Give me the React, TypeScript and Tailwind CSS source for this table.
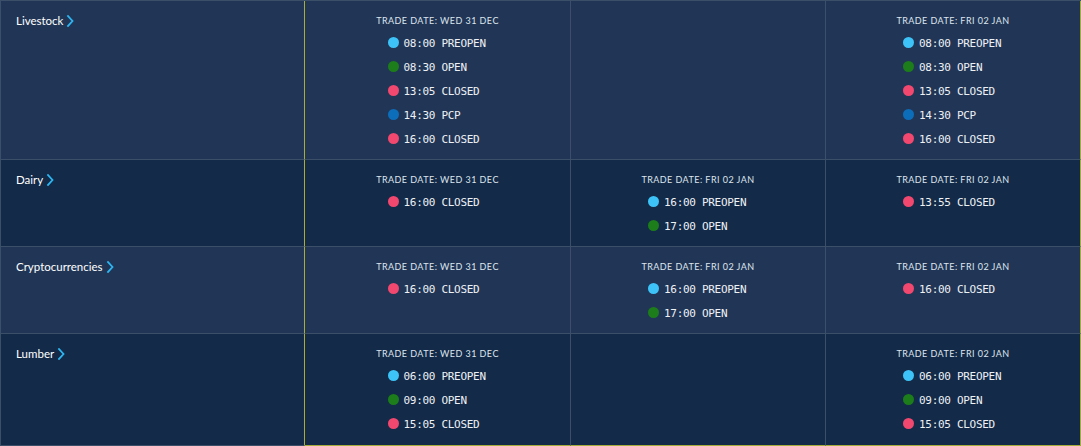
import React from "react";

type Ev = { t: string; s: "PREOPEN" | "OPEN" | "CLOSED" | "PCP" };
type Cell = { date: string; ev: Ev[] } | null;
type Row = { name: string; cells: Cell[] };

const dotColor: Record<string, string> = {
  PREOPEN: "bg-[#3dc3f8]",
  OPEN: "bg-[#1c7d1a]",
  CLOSED: "bg-[#f2476f]",
  PCP: "bg-[#0c6dbb]",
};

const wed = "TRADE DATE: WED 31 DEC";
const fri = "TRADE DATE: FRI 02 JAN";

const rows: Row[] = [
  {
    name: "Livestock",
    cells: [
      {
        date: wed,
        ev: [
          { t: "08:00", s: "PREOPEN" },
          { t: "08:30", s: "OPEN" },
          { t: "13:05", s: "CLOSED" },
          { t: "14:30", s: "PCP" },
          { t: "16:00", s: "CLOSED" },
        ],
      },
      null,
      {
        date: fri,
        ev: [
          { t: "08:00", s: "PREOPEN" },
          { t: "08:30", s: "OPEN" },
          { t: "13:05", s: "CLOSED" },
          { t: "14:30", s: "PCP" },
          { t: "16:00", s: "CLOSED" },
        ],
      },
    ],
  },
  {
    name: "Dairy",
    cells: [
      { date: wed, ev: [{ t: "16:00", s: "CLOSED" }] },
      {
        date: fri,
        ev: [
          { t: "16:00", s: "PREOPEN" },
          { t: "17:00", s: "OPEN" },
        ],
      },
      { date: fri, ev: [{ t: "13:55", s: "CLOSED" }] },
    ],
  },
  {
    name: "Cryptocurrencies",
    cells: [
      { date: wed, ev: [{ t: "16:00", s: "CLOSED" }] },
      {
        date: fri,
        ev: [
          { t: "16:00", s: "PREOPEN" },
          { t: "17:00", s: "OPEN" },
        ],
      },
      { date: fri, ev: [{ t: "16:00", s: "CLOSED" }] },
    ],
  },
  {
    name: "Lumber",
    cells: [
      {
        date: wed,
        ev: [
          { t: "06:00", s: "PREOPEN" },
          { t: "09:00", s: "OPEN" },
          { t: "15:05", s: "CLOSED" },
        ],
      },
      null,
      {
        date: fri,
        ev: [
          { t: "06:00", s: "PREOPEN" },
          { t: "09:00", s: "OPEN" },
          { t: "15:05", s: "CLOSED" },
        ],
      },
    ],
  },
];

function CellContent({ cell, last }: { cell: Cell; last: boolean }) {
  if (!cell) return null;
  return (
    <div className={`flex flex-col items-center pt-[13px] ${last ? "pb-[8px]" : "pb-[7px]"}`}>
      <div
        className="h-[13px] leading-[13px] text-[9px] tracking-[0.45px] text-[#dfe5ee] whitespace-nowrap"
        style={{ fontFamily: "Lato, 'Noto Sans', sans-serif" }}
      >
        {cell.date}
      </div>
      <div className="mt-[5px] w-[100px] flex flex-col">
        {cell.ev.map((e, i) => (
          <div key={i} className="h-[24px] flex items-center whitespace-nowrap">
            <span className={`shrink-0 w-[11px] h-[11px] rounded-full mb-[3px] ${dotColor[e.s]}`} />
            <span
              className="ml-[5px] text-[11px] tracking-[-0.3px] text-[#eef1f5]"
              style={{ fontFamily: "'DejaVu Sans Mono', 'Liberation Mono', monospace" }}
            >
              {e.t} {e.s}
            </span>
          </div>
        ))}
      </div>
    </div>
  );
}

export default function App() {
  const widths = ["w-[266px]", "w-[255px]", "w-[255px]"];
  return (
    <div className="w-[1081px] h-[446px] bg-[#132a48] border-l border-t border-[#3b4f69] overflow-hidden">
      {rows.map((r, ri) => {
        const last = ri === rows.length - 1;
        const bg = ri % 2 === 0 ? "bg-[#213656]" : "bg-[#132a48]";
        return (
          <div key={ri} className={`flex ${bg}`}>
            <div
              className={`w-[304px] shrink-0 border-r border-r-[#a7ad3a] border-b border-b-[#3b4f69] pl-[15px] pt-[13px]`}
            >
              <div className="flex items-center h-[14px]">
                <span
                  className="text-[11.5px] text-white leading-[14px]"
                  style={{ fontFamily: "Lato, 'Noto Sans', sans-serif" }}
                >
                  {r.name}
                </span>
                <svg width="9" height="12" viewBox="0 0 9 12" className="ml-[3px]">
                  <polyline
                    points="2,1 6.5,6 2,11"
                    fill="none"
                    stroke="#2db6f1"
                    strokeWidth="1.8"
                    strokeLinecap="square"
                  />
                </svg>
              </div>
            </div>
            {r.cells.map((c, ci) => (
              <div
                key={ci}
                className={`${widths[ci]} shrink-0 border-r border-b ${
                  ci === 2 ? "border-r-[#a7ad3a]" : "border-r-[#3b4f69]"
                } ${last ? "border-b-[#a7ad3a]" : "border-b-[#3b4f69]"}`}
              >
                <CellContent cell={c} last={last} />
              </div>
            ))}
          </div>
        );
      })}
    </div>
  );
}
